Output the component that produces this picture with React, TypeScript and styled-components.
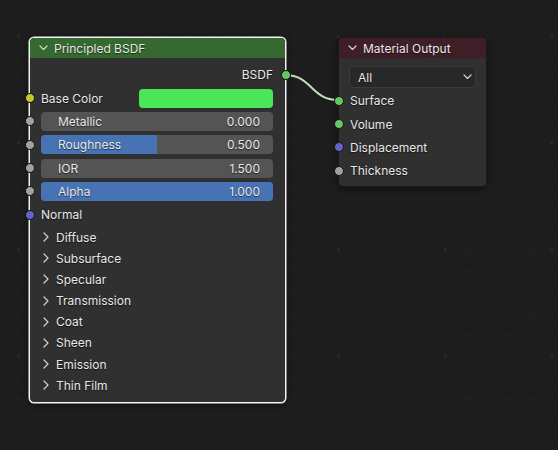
import React from "react";
import styled, { createGlobalStyle } from "styled-components";

const Global = createGlobalStyle`
  html, body { margin: 0; padding: 0; }
  body {
    width: 558px; height: 450px; overflow: hidden;
    font-family: Inter, "Noto Sans", "DejaVu Sans", sans-serif;
  }
`;

const Canvas = styled.div`
  position: relative;
  width: 558px;
  height: 450px;
  background-color: #1d1d1d;
  background-image:
    radial-gradient(circle, #2d2d2d 0.9px, transparent 1.3px),
    radial-gradient(circle, #262626 0.9px, transparent 1.3px);
  background-size: 106.67px 106.67px, 21.33px 21.33px;
  background-position: -34.6px -16.6px, 7.7px 4.3px;
  overflow: hidden;
  color: #e8e8e8;
  font-size: 12px;
  text-shadow: 0 1px 1px rgba(0, 0, 0, 0.6);
`;

const Node = styled.div<{ $x: number; $y: number; $w: number; $selected?: boolean }>`
  position: absolute;
  left: ${(p) => p.$x}px;
  top: ${(p) => p.$y}px;
  width: ${(p) => p.$w}px;
  box-sizing: border-box;
  background: #303030;
  border-radius: 5px;
  border: 1px solid ${(p) => (p.$selected ? "#f2f2f2" : "#1a1a1a")};
  box-shadow: ${(p) =>
    p.$selected
      ? "0 0 0 0.5px #f2f2f2, 0 2px 6px rgba(0,0,0,0.5)"
      : "0 2px 6px rgba(0,0,0,0.5)"};
  display: flex;
  flex-direction: column;
`;

const Header = styled.div<{ $color: string }>`
  height: 20px;
  background: ${(p) => p.$color};
  border-radius: 4px 4px 0 0;
  display: flex;
  align-items: center;
  gap: 6px;
  padding-left: 9px;
  font-size: 12px;
  color: #e8e8e8;
`;

const Body = styled.div<{ $pt: number; $pb: number }>`
  display: flex;
  flex-direction: column;
  padding: ${(p) => p.$pt}px 0 ${(p) => p.$pb}px 0;
`;

const Row = styled.div<{ $h?: number; $align?: "left" | "right" }>`
  position: relative;
  height: ${(p) => p.$h ?? 23.35}px;
  display: flex;
  align-items: center;
  justify-content: ${(p) => (p.$align === "right" ? "flex-end" : "flex-start")};
  padding: 0 12px 0 11px;
  gap: 8px;
`;

const Socket = styled.span<{ $color: string; $side: "left" | "right" }>`
  position: absolute;
  top: 50%;
  ${(p) => p.$side}: -5.5px;
  width: 8px;
  height: 8px;
  margin-top: -5px;
  border-radius: 50%;
  background: ${(p) => p.$color};
  border: 1px solid #151515;
`;

const Label = styled.span`
  white-space: nowrap;
`;

const Swatch = styled.div<{ $color: string }>`
  margin-left: auto;
  width: 134px;
  height: 19px;
  border-radius: 4px;
  background: ${(p) => p.$color};
`;

const Slider = styled.div`
  position: relative;
  flex: 1;
  height: 19px;
  border-radius: 4px;
  background: #545454;
  overflow: hidden;
  display: flex;
  align-items: center;
  justify-content: space-between;
  padding: 0 13px 0 17px;
`;

const Fill = styled.div`
  position: absolute;
  left: 0;
  top: 0;
  bottom: 0;
  background: #4772b3;
`;

const SliderText = styled.span`
  position: relative;
  white-space: nowrap;
`;

const PanelRow = styled.div`
  height: 21.2px;
  display: flex;
  align-items: center;
  gap: 7px;
  padding-left: 13px;
`;

const Select = styled.div`
  margin: 8px 10px 1px 10px;
  height: 20px;
  border-radius: 4px;
  background: #282828;
  border: 1px solid #3b3b3b;
  display: flex;
  align-items: center;
  justify-content: space-between;
  padding: 0 3px 0 8px;
`;

const LinkLayer = styled.svg`
  position: absolute;
  left: 0;
  top: 0;
  pointer-events: none;
`;

const ChevronDown = ({ size = 9 }: { size?: number }) => (
  <svg width={size} height={size * 0.6} viewBox="0 0 10 6" fill="none">
    <path d="M1 1 L5 5 L9 1" stroke="#dcdcdc" strokeWidth="1.3" strokeLinecap="round" strokeLinejoin="round" />
  </svg>
);

const ChevronRight = () => (
  <svg width="6" height="10" viewBox="0 0 6 10" fill="none">
    <path d="M1 1 L5 5 L1 9" stroke="#d0d0d0" strokeWidth="1.2" strokeLinecap="round" strokeLinejoin="round" />
  </svg>
);

const sliders = [
  { label: "Metallic", value: "0.000", fill: 0 },
  { label: "Roughness", value: "0.500", fill: 0.5 },
  { label: "IOR", value: "1.500", fill: 0 },
  { label: "Alpha", value: "1.000", fill: 1 },
];

const panels = ["Diffuse", "Subsurface", "Specular", "Transmission", "Coat", "Sheen", "Emission", "Thin Film"];

const outputs = [
  { label: "Surface", color: "#63c763" },
  { label: "Volume", color: "#63c763" },
  { label: "Displacement", color: "#6363c7" },
  { label: "Thickness", color: "#a1a1a1" },
];

export default function App() {
  return (
    <Canvas>
      <Global />
      <LinkLayer width={558} height={450}>
        <path d="M285 75 C 312 75, 311 100, 338 100" stroke="#c3dfbb" strokeWidth="2" fill="none" />
      </LinkLayer>

      <Node $x={29} $y={37} $w={257} $selected>
        <Header $color="#36692f">
          <ChevronDown />
          <span>Principled BSDF</span>
        </Header>
        <Body $pt={5} $pb={6}>
          <Row $align="right">
            <Label>BSDF</Label>
            <Socket $color="#63c763" $side="right" />
          </Row>
          <Row>
            <Socket $color="#c7c729" $side="left" />
            <Label>Base Color</Label>
            <Swatch $color="#4ce65a" />
          </Row>
          {sliders.map((s) => (
            <Row key={s.label}>
              <Socket $color="#a1a1a1" $side="left" />
              <Slider>
                {s.fill > 0 && <Fill style={{ width: `${s.fill * 100}%` }} />}
                <SliderText>{s.label}</SliderText>
                <SliderText>{s.value}</SliderText>
              </Slider>
            </Row>
          ))}
          <Row>
            <Socket $color="#6363c7" $side="left" />
            <Label>Normal</Label>
          </Row>
          {panels.map((p) => (
            <PanelRow key={p}>
              <ChevronRight />
              <Label>{p}</Label>
            </PanelRow>
          ))}
        </Body>
      </Node>

      <Node $x={338} $y={37} $w={149}>
        <Header $color="#3f1e27">
          <ChevronDown />
          <span>Material Output</span>
        </Header>
        <Select>
          <Label>All</Label>
          <ChevronDown size={9} />
        </Select>
        <Body $pt={0} $pb={4}>
          {outputs.map((o) => (
            <Row key={o.label}>
              <Socket $color={o.color} $side="left" />
              <Label>{o.label}</Label>
            </Row>
          ))}
        </Body>
      </Node>
    </Canvas>
  );
}
